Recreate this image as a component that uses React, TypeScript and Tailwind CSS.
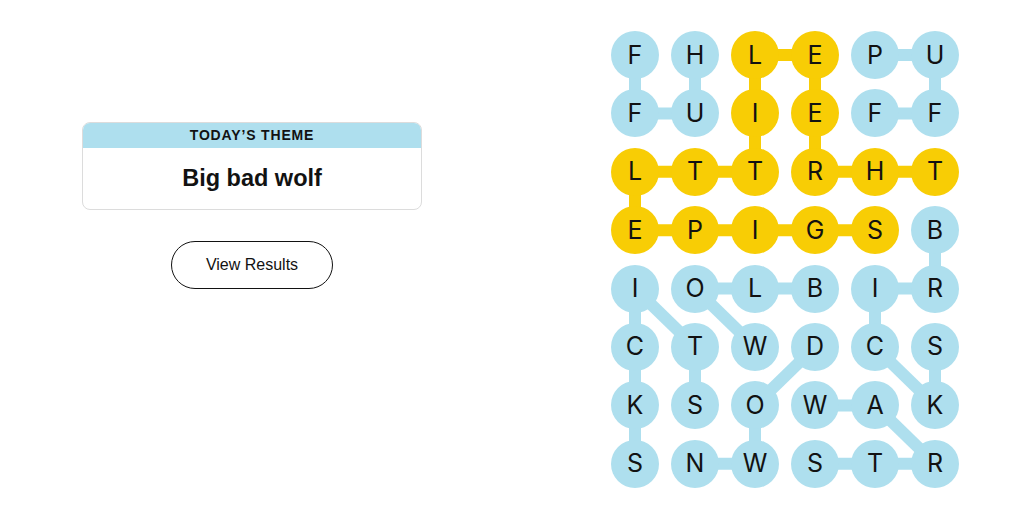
import type { ReactNode } from 'react';

const BOARD = [
    'FHLEPU',
    'FUIEFF',
    'LTTRHT',
    'EPIGSB',
    'IOLBIR',
    'CTWDCS',
    'KSOWAK',
    'SNWSTR',
];

type Cell = [number, number];

// found words as paths of [row, col]
const WORDS: { path: Cell[]; spangram?: boolean }[] = [
    { path: [[1, 0], [0, 0]] },
    { path: [[0, 1], [1, 1], [1, 0]] },
    { path: [[0, 4], [0, 5], [1, 5]] },
    { path: [[1, 4], [1, 5]] },
    { path: [[3, 5], [4, 5], [4, 4], [5, 4], [6, 5], [5, 5]] },
    { path: [[7, 0], [6, 0], [5, 0], [4, 0], [5, 1], [6, 1]] },
    { path: [[4, 3], [4, 2], [4, 1], [5, 2]] },
    { path: [[5, 3], [6, 2], [7, 2], [7, 1]] },
    { path: [[7, 3], [7, 4], [7, 5], [6, 4], [6, 3]] },
    {
        spangram: true,
        path: [
            [2, 5], [2, 4], [2, 3], [1, 3], [0, 3], [0, 2], [1, 2], [2, 2],
            [2, 1], [2, 0], [3, 0], [3, 1], [3, 2], [3, 3], [3, 4],
        ],
    },
];

const SIZE = 48;
const STEP_X = 60;
const STEP_Y = 58.4;
const BLUE = '#aedfee';
const YELLOW = '#f8cd05';

const yellowCells = new Set(
    WORDS.filter((w) => w.spangram).flatMap((w) => w.path.map(([r, c]) => `${r}-${c}`)),
);

function center([r, c]: Cell) {
    return { x: c * STEP_X + SIZE / 2, y: r * STEP_Y + SIZE / 2 };
}

function Connectors() {
    const lines: ReactNode[] = [];
    WORDS.forEach((w, wi) => {
        for (let i = 1; i < w.path.length; i++) {
            const a = center(w.path[i - 1]);
            const b = center(w.path[i]);
            lines.push(
                <line
                    key={`${wi}-${i}`}
                    x1={a.x}
                    y1={a.y}
                    x2={b.x}
                    y2={b.y}
                    stroke={w.spangram ? YELLOW : BLUE}
                    strokeWidth={12}
                />,
            );
        }
    });
    return (
        <svg className="absolute inset-0 w-full h-full" aria-hidden>
            {lines}
        </svg>
    );
}

function Board() {
    return (
        <div className="relative w-[348px] h-[457px]">
            <Connectors />
            <div className="relative grid grid-cols-[repeat(6,48px)] grid-rows-[repeat(8,48px)] gap-x-[12px] gap-y-[10.4px]">
                {BOARD.flatMap((row, r) =>
                    row.split('').map((ch, c) => (
                        <div
                            key={`${r}-${c}`}
                            className={`w-[48px] h-[48px] rounded-full flex items-center justify-center text-[25px] leading-none text-[#121212] font-['Inter',sans-serif] ${
                                yellowCells.has(`${r}-${c}`) ? 'bg-[#f8cd05]' : 'bg-[#aedfee]'
                            }`}
                        >
                            {ch}
                        </div>
                    )),
                )}
            </div>
        </div>
    );
}

export default function App() {
    return (
        <div className="w-[1024px] h-[531px] bg-white flex font-['Liberation_Sans',sans-serif]">
            {/* Theme + results */}
            <div className="w-[504px] flex flex-col items-center pt-[122px]">
                <div className="w-[340px] rounded-lg border border-[#dcdcdc] overflow-hidden">
                    <div className="h-[25px] bg-[#aedfee] flex items-center justify-center text-[14px] font-bold tracking-[0.06em] text-[#121212]">
                        TODAY’S THEME
                    </div>
                    <div className="h-[61px] flex items-center justify-center text-[23.5px] font-bold text-[#121212]">
                        Big bad wolf
                    </div>
                </div>
                <button className="mt-[31px] w-[162px] h-[48px] rounded-full border border-[#121212] text-[16px] text-[#121212]">
                    View Results
                </button>
            </div>

            {/* Game board */}
            <div className="pl-[107px] pt-[31px]">
                <Board />
            </div>
        </div>
    );
}
